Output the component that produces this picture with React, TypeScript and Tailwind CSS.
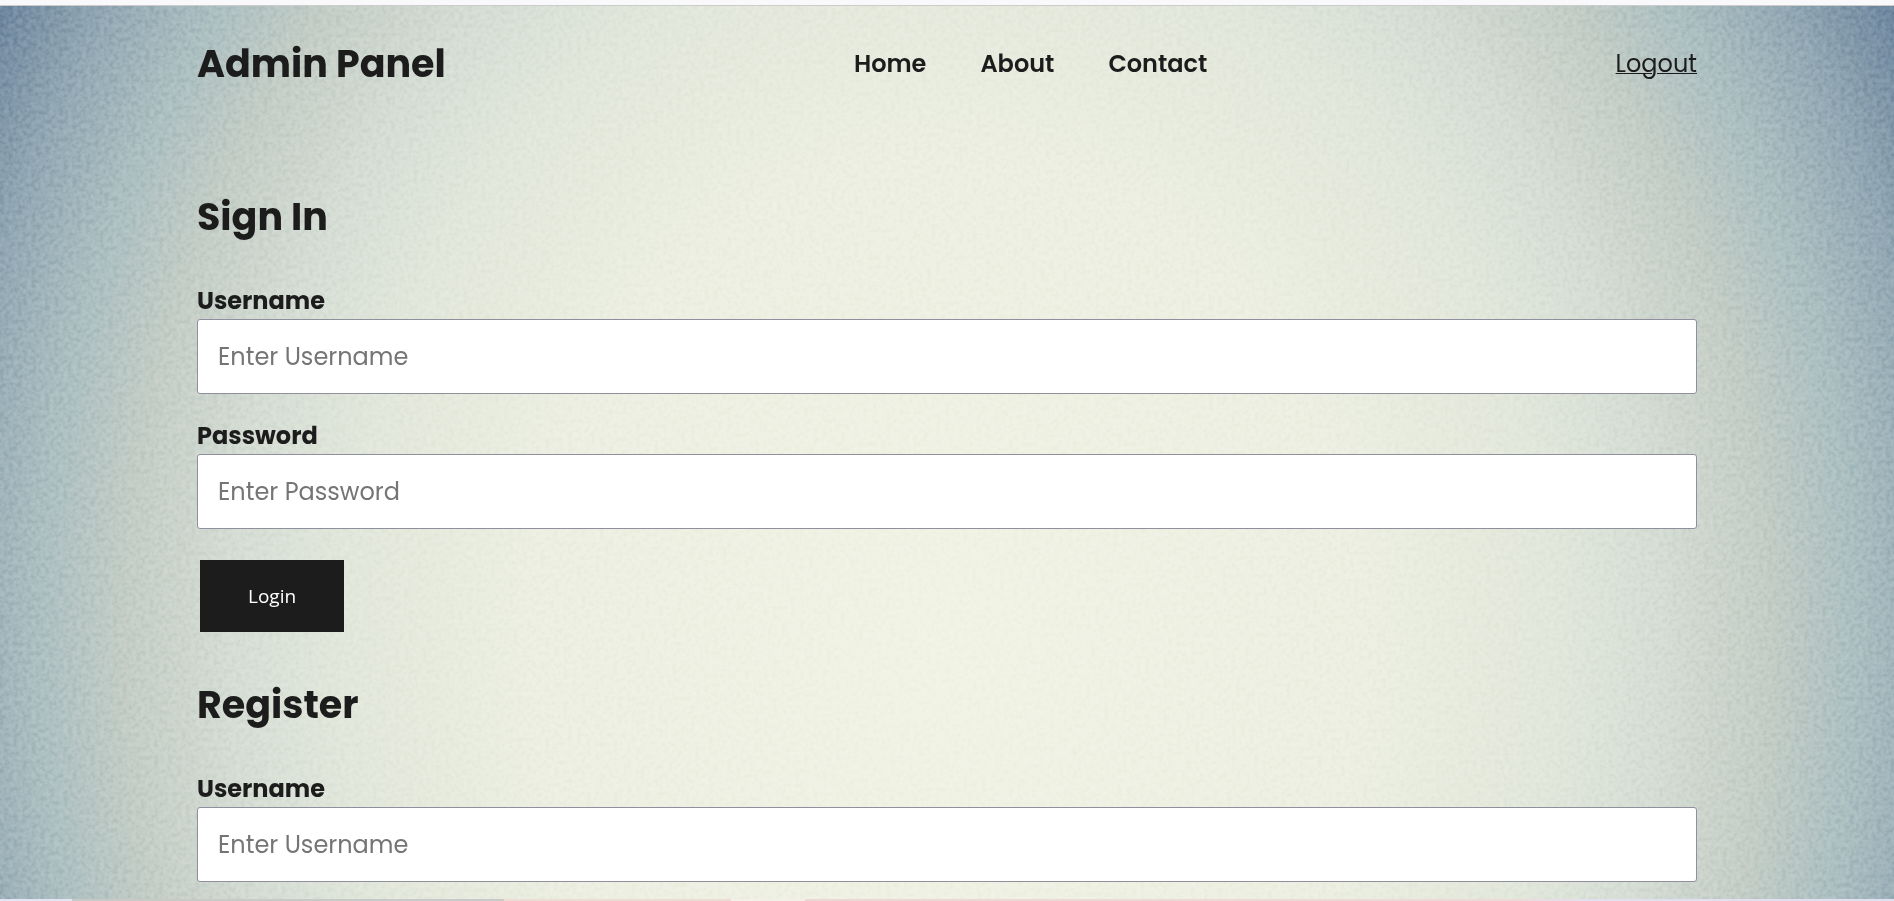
import { useId } from "react";

const navItems = ["Home", "About", "Contact"];

function Field({ label, placeholder, type = "text" }: { label: string; placeholder: string; type?: string }) {
  const id = useId();
  return (
    <div className="flex flex-col">
      <label htmlFor={id} className="text-2xl leading-9 font-bold">
        {label}
      </label>
      <input
        id={id}
        type={type}
        placeholder={placeholder}
        className="h-[75px] w-full rounded-[3px] border border-[#8f8f9d] bg-white px-5 text-2xl placeholder:text-[#757575]"
      />
    </div>
  );
}

function Paper() {
  return (
    <svg className="absolute inset-0 -z-10 h-full w-full opacity-20 mix-blend-soft-light" aria-hidden="true">
      <filter id="grain" x="0" y="0" width="100%" height="100%" colorInterpolationFilters="sRGB">
        <feTurbulence type="fractalNoise" baseFrequency="0.22" numOctaves="2" seed="4" />
        <feColorMatrix values="2 0 0 0 -0.5  2 0 0 0 -0.5  2 0 0 0 -0.5  0 0 0 0 1" />
      </filter>
      <rect width="100%" height="100%" filter="url(#grain)" />
    </svg>
  );
}

export default function App() {
  return (
    <div className="flex min-h-screen flex-col font-['Poppins','Inter',sans-serif] text-[#1c1c1c]">
      <div className="h-[6px] border-b border-[#cccccc] bg-[#f9f9fb]" />
      <div className="relative isolate flex-1 bg-[radial-gradient(63%_158%_at_50%_72%,#f1f3e5_0%,#ecefe1_35%,#e2e7db_51%,#d5ddd4_60%,#c3cdc6_69%,#a9bdc0_77%,#91a7b3_84%,#7189a1_91%,#5f7896_100%)] px-8">
        <Paper />
        <div className="mx-auto max-w-[1500px]">
          <header className="flex h-[115px] items-center justify-between">
            <h1 className="text-[38px] font-bold">Admin Panel</h1>
            <nav className="flex gap-[54px] text-2xl font-semibold">
              {navItems.map((item) => (
                <a key={item} href="#">
                  {item}
                </a>
              ))}
            </nav>
            <a href="#" className="text-2xl underline decoration-1">
              Logout
            </a>
          </header>
          <main>
            <form className="mt-[66px]" onSubmit={(e) => e.preventDefault()}>
              <h2 className="text-[38px] leading-[60px] font-bold">Sign In</h2>
              <div className="mt-9 flex flex-col gap-6">
                <Field label="Username" placeholder="Enter Username" />
                <Field label="Password" placeholder="Enter Password" type="password" />
              </div>
              <button type="submit" className="mx-[3px] mt-[31px] block bg-[#1c1c1c] px-12 py-[22px] font-['Open_Sans',sans-serif] text-[19px] leading-7 text-white">
                Login
              </button>
            </form>
            <form className="mt-[43px]" onSubmit={(e) => e.preventDefault()}>
              <h2 className="text-[38px] leading-[60px] font-bold">Register</h2>
              <div className="mt-9 flex flex-col gap-6">
                <Field label="Username" placeholder="Enter Username" />
              </div>
            </form>
          </main>
        </div>
      </div>
      <div className="flex h-[2px]">
        <div className="w-[72px] bg-[#e4e4f4]" />
        <div className="w-[432px] bg-[#c8cac8]" />
        <div className="w-[227px] bg-[#eddcd3]" />
        <div className="w-[74px] bg-[#f5efea]" />
        <div className="flex-1 bg-[linear-gradient(90deg,#ecd6d6_0%,#eed9d9_65%,#e2e0f0_72%)]" />
      </div>
    </div>
  );
}
